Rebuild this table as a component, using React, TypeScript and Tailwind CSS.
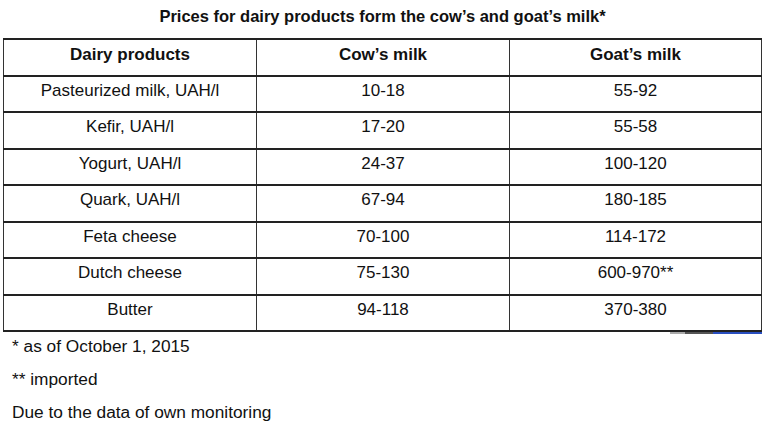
const rows = [
  { product: 'Pasteurized milk, UAH/l', cow: '10-18', goat: '55-92' },
  { product: 'Kefir, UAH/l', cow: '17-20', goat: '55-58' },
  { product: 'Yogurt, UAH/l', cow: '24-37', goat: '100-120' },
  { product: 'Quark, UAH/l', cow: '67-94', goat: '180-185' },
  { product: 'Feta cheese', cow: '70-100', goat: '114-172' },
  { product: 'Dutch cheese', cow: '75-130', goat: '600-970**' },
  { product: 'Butter', cow: '94-118', goat: '370-380' },
];

function Row({ cells, bold }: { cells: string[]; bold?: boolean }) {
  return (
    <div className="grid grid-cols-[253px_253px_253px] h-[36.5px] border-t-2 border-[#222]">
      {cells.map((c, i) => (
        <div
          key={i}
          className={`text-center leading-[20px] border-l border-[#333] ${i === 2 ? 'border-r' : ''} ${bold ? 'font-bold pt-[5px]' : 'pt-[4px]'}`}
        >
          {c}
        </div>
      ))}
    </div>
  );
}

export default function App() {
  return (
    <div className="w-[765px] h-[428px] bg-white overflow-hidden text-[#111] font-['Liberation_Sans',Arial,sans-serif]">
      <h1 className="h-[38px] pt-[6px] text-center font-bold text-[16.5px] leading-[20px]">
        Prices for dairy products form the cow’s and goat’s milk*
      </h1>
      <div className="ml-[3px] w-[759px] text-[17px] border-b-2 border-[#222]">
        <Row cells={['Dairy products', 'Cow’s milk', 'Goat’s milk']} bold />
        {rows.map((r) => (
          <Row key={r.product} cells={[r.product, r.cow, r.goat]} />
        ))}
      </div>
      <div className="flex justify-end h-[2px] pr-[3px]">
        <div className="w-[15px] bg-[#aaa]" />
        <div className="w-[28px] bg-[#555]" />
        <div className="w-[49px] bg-[#2a4fc0]" />
      </div>
      <div className="pl-[12px] pt-[2px] text-[17.3px] leading-[20px] flex flex-col gap-[13px]">
        <p>* as of October 1, 2015</p>
        <p>** imported</p>
        <p>Due to the data of own monitoring</p>
      </div>
    </div>
  );
}
